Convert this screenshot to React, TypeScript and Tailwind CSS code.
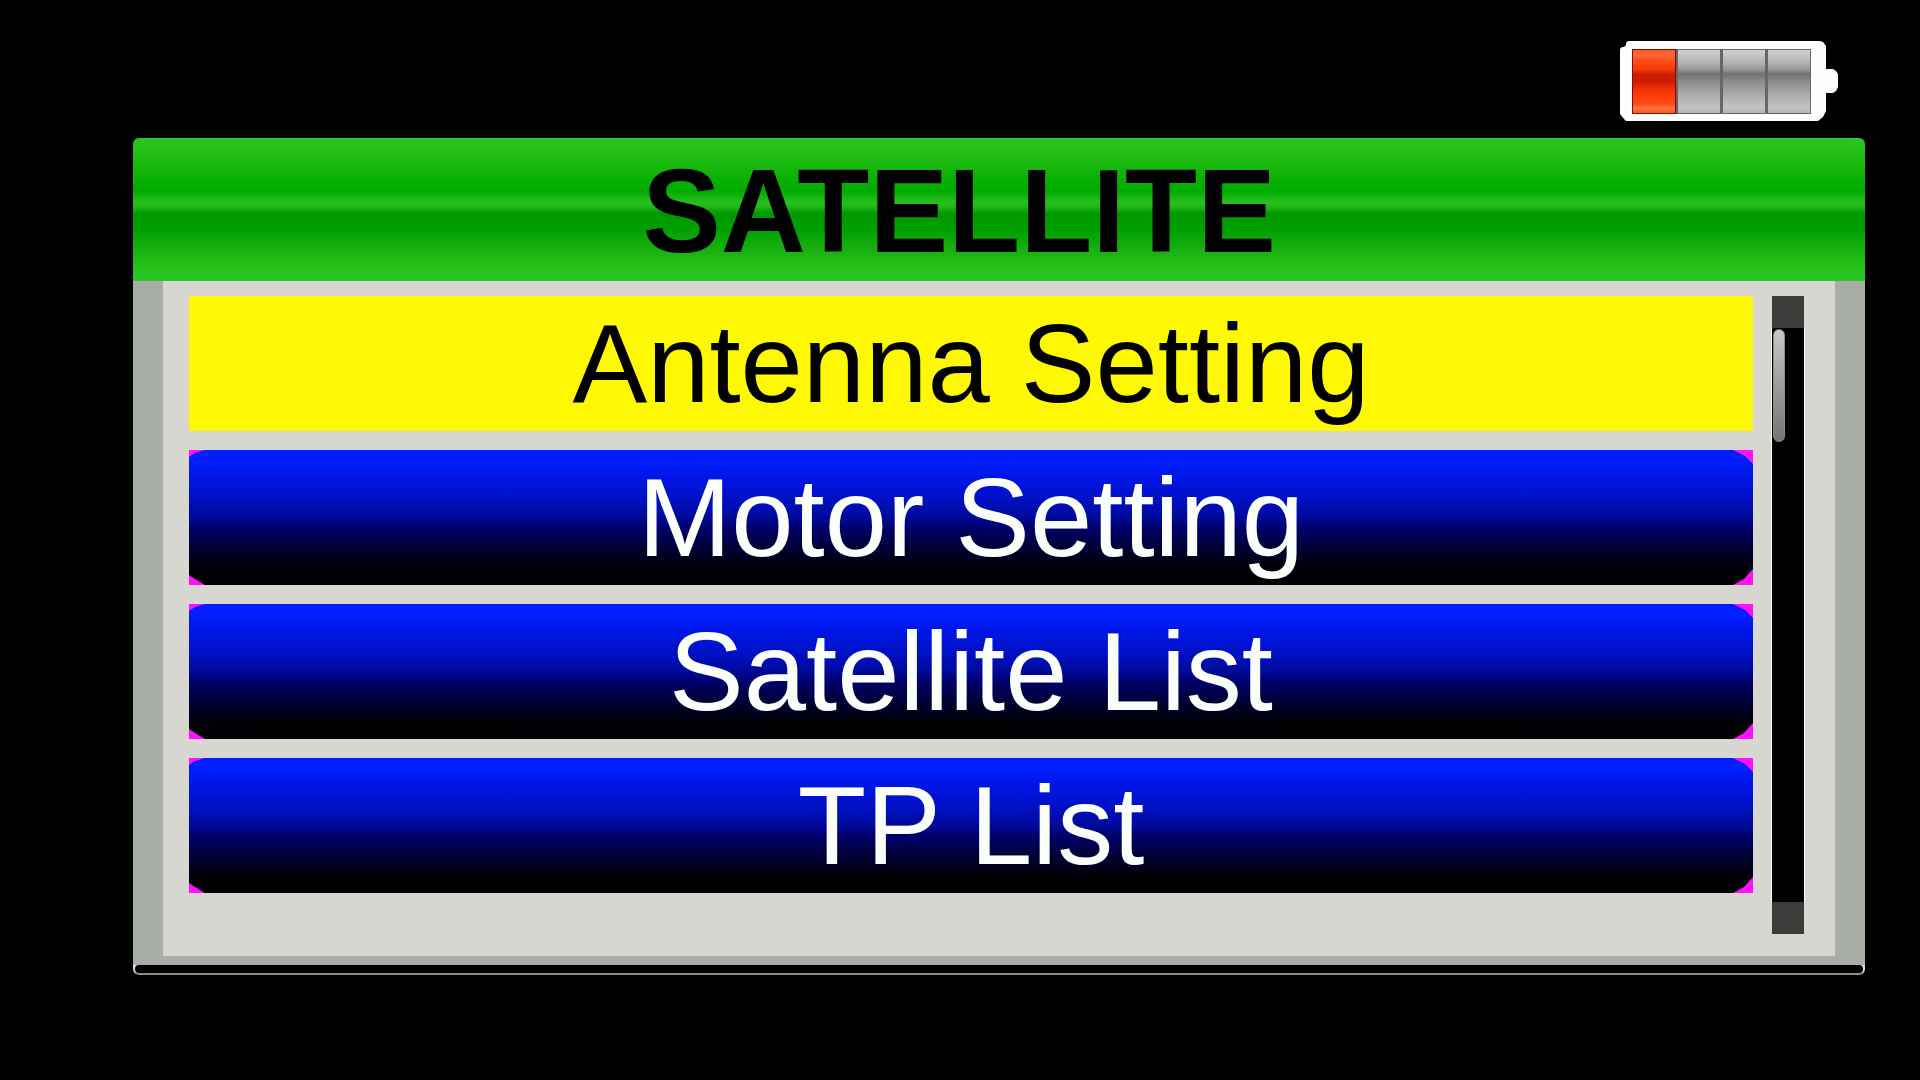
import clsx from "clsx";

const menuItems = [
  { id: "antenna", label: "Antenna Setting" },
  { id: "motor", label: "Motor Setting" },
  { id: "satellites", label: "Satellite List" },
  { id: "transponders", label: "TP List" },
];

const selectedId = "antenna";

const cells = [
  { x: 12, fill: "url(#cell-on)", stroke: "#7a1000" },
  { x: 57, fill: "url(#cell-off)", stroke: "#666666" },
  { x: 102, fill: "url(#cell-off)", stroke: "#666666" },
  { x: 147, fill: "url(#cell-off)", stroke: "#666666" },
];

function Battery() {
  return (
    <svg
      role="img"
      aria-label="Battery low"
      width="218"
      height="82"
      viewBox="0 0 218 82"
    >
      <defs>
        <linearGradient id="cell-on" x1="0" y1="0" x2="0" y2="1">
          <stop offset="0" stopColor="#ff5420" />
          <stop offset="0.08" stopColor="#ff6a38" />
          <stop offset="0.16" stopColor="#ff5018" />
          <stop offset="0.32" stopColor="#f43808" />
          <stop offset="0.38" stopColor="#d02000" />
          <stop offset="0.5" stopColor="#c81c00" />
          <stop offset="0.58" stopColor="#e82c00" />
          <stop offset="0.72" stopColor="#ff3c0c" />
          <stop offset="0.86" stopColor="#ff4c14" />
          <stop offset="0.91" stopColor="#ff7448" />
          <stop offset="1" stopColor="#ff5420" />
        </linearGradient>
        <linearGradient id="cell-off" x1="0" y1="0" x2="0" y2="1">
          <stop offset="0" stopColor="#d2d2d2" />
          <stop offset="0.2" stopColor="#b4b4b4" />
          <stop offset="0.32" stopColor="#969696" />
          <stop offset="0.38" stopColor="#707070" />
          <stop offset="0.5" stopColor="#8c8c8c" />
          <stop offset="0.7" stopColor="#aaaaaa" />
          <stop offset="0.9" stopColor="#c4c4c4" />
          <stop offset="1" stopColor="#b4b4b4" />
        </linearGradient>
      </defs>
      <path
        d="M8 1H200L203 2L206 6V29H213L216 31L218 34V47L216 51L213 53H206V71L203 77L198 81H6L4 79L0 74V9L2 7H4L6 5V3Z"
        fill="#fdfffc"
      />
      <rect x="12" y="9" width="179" height="65" fill="#666666" />
      {cells.map((cell) => (
        <rect
          key={cell.x}
          x={cell.x + 0.5}
          y="9.5"
          width="43"
          height="64"
          fill={cell.fill}
          stroke={cell.stroke}
        />
      ))}
    </svg>
  );
}

function MenuButton({ label, selected }: { label: string; selected: boolean }) {
  return (
    <button
      type="button"
      aria-current={selected ? "true" : undefined}
      className={clsx(
        "block w-full text-center text-[112px] leading-[135px]",
        selected ? "bg-[#fff805] text-black" : "bg-[#ff10ff] text-[#fbfffb]",
      )}
    >
      <span
        className={clsx(
          "block",
          !selected &&
            "[clip-path:polygon(0_7px,6px_3px,16px_0,calc(100%-20px)_0,calc(100%-8px)_6px,100%_14px,100%_calc(100%-16px),calc(100%-9px)_calc(100%-6px),calc(100%-20px)_100%,16px_100%,6px_calc(100%-6px),0_calc(100%-10px))] bg-[linear-gradient(#001eff_0%,#001eff_8%,#0016e8_20%,#0010c0_38%,#000a98_50%,#00006a_58%,#000030_74%,#000004_88%,#000_100%)]",
        )}
      >
        {label}
      </span>
    </button>
  );
}

function ScrollBar() {
  return (
    <div className="flex w-[34px] shrink-0 flex-col">
      <button
        type="button"
        aria-label="Scroll up"
        className="mx-px h-8 bg-[#3c3c3a]"
      />
      <div className="flex-1 border-x border-white bg-black px-px pt-px">
        <div className="h-[113px] w-3 rounded-full border border-[#8c8c8c] bg-linear-to-b from-[#c8c8c8] to-[#747474]" />
      </div>
      <button
        type="button"
        aria-label="Scroll down"
        className="mx-px h-8 bg-[#3c3c3a]"
      />
    </div>
  );
}

export default function App() {
  return (
    <main className="min-h-screen w-full bg-black pt-10 pr-[55px] pb-10 pl-[133px] font-['Liberation_Sans',Arial,sans-serif]">
      <div className="flex justify-end pr-[27px]">
        <Battery />
      </div>

      <section className="mt-4">
        <header className="rounded-t-md bg-[linear-gradient(#28c81e_0%,#28c01a_8%,#08b000_30%,#00aa00_37%,#28c01c_45%,#22b818_48%,#009800_53%,#00a000_64%,#18b010_78%,#28c01a_90%,#28c828_100%)] pt-1 pr-20">
          <h1 className="text-center text-[118px] leading-[139px] font-bold text-black">
            SATELLITE
          </h1>
        </header>

        <div className="bg-[#a8aea6] px-[30px] pb-[9px]">
          <div className="flex gap-[18px] bg-[#d7d6d1] pt-[15px] pr-[30px] pb-[22px] pl-[26px]">
            <nav className="flex flex-1 flex-col gap-[19px] pb-[41px]">
              {menuItems.map((item) => (
                <MenuButton
                  key={item.id}
                  label={item.label}
                  selected={item.id === selectedId}
                />
              ))}
            </nav>
            <ScrollBar />
          </div>
        </div>

        <div className="rounded-b-md border-x-2 border-b-2 border-x-[#d8dcd6] border-b-[#8a9088] bg-[#d8dcd6]">
          <div className="h-2 rounded-sm bg-black" />
        </div>
      </section>
    </main>
  );
}
